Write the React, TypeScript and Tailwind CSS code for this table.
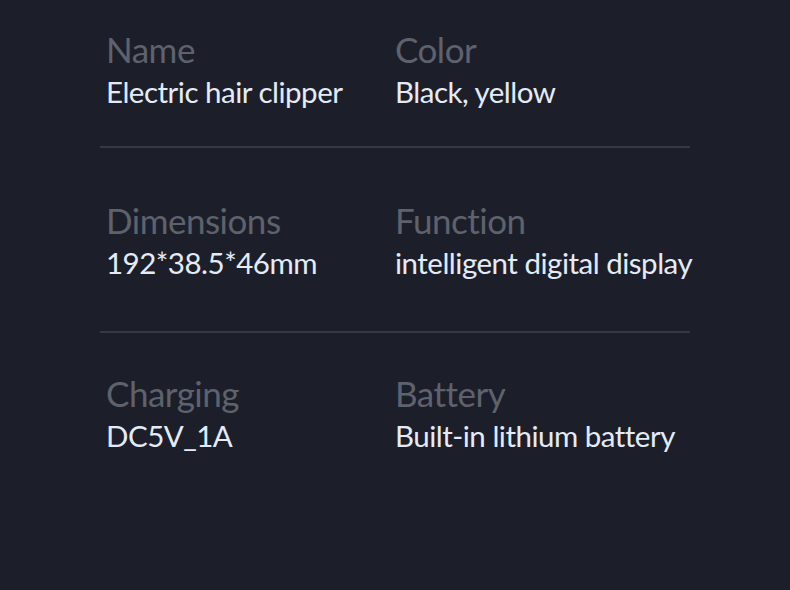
const rows = [
  {
    cls: 'h-[148px] pt-[27px] border-b-2 border-[#363944]',
    items: [
      { label: 'Name', value: 'Electric hair clipper' },
      { label: 'Color', value: 'Black, yellow' },
    ],
  },
  {
    cls: 'h-[185px] pt-[50px] border-b-2 border-[#363944]',
    items: [
      { label: 'Dimensions', value: '192*38.5*46mm' },
      { label: 'Function', value: 'intelligent digital display' },
    ],
  },
  {
    cls: 'pt-[38px]',
    items: [
      { label: 'Charging', value: 'DC5V_1A' },
      { label: 'Battery', value: 'Built-in lithium battery' },
    ],
  },
];

export default function App() {
  return (
    <div
      className="w-[790px] h-[590px] bg-[#1c1f2a] pl-[100px]"
      style={{ fontFamily: 'Lato, "Noto Sans", sans-serif' }}
    >
      {rows.map((row, i) => (
        <div key={i} className={`w-[590px] ${row.cls}`}>
          <div className="flex">
            <div className="w-[295px] shrink-0 pl-[6px]">
              <div className="text-[35px] leading-[44px] text-[#5e626c] tracking-[-0.5px]">{row.items[0].label}</div>
              <div className="text-[29.5px] leading-[42px] text-[#e4ebf7] tracking-[-0.5px] whitespace-nowrap">{row.items[0].value}</div>
            </div>
            <div className="shrink-0">
              <div className="text-[35px] leading-[44px] text-[#5e626c] tracking-[-0.5px]">{row.items[1].label}</div>
              <div className="text-[29.5px] leading-[42px] text-[#e4ebf7] tracking-[-0.5px] whitespace-nowrap">{row.items[1].value}</div>
            </div>
          </div>
        </div>
      ))}
    </div>
  );
}
